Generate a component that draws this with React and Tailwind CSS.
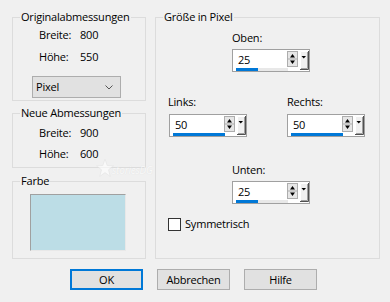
import React from "react";

function SpinBox({ value, bar = 22 }) {
  return (
    <div className="relative w-[78px] h-[23px] bg-white border border-[#a0a0a0] flex items-start">
      <span className="ml-[5px] mt-[2px] leading-[16px]">{value}</span>
      <div className="absolute left-[3px] top-[18px] w-[52px] h-[3px] bg-[#e8e8e8]">
        <div className="h-[3px] bg-[#0078d7]" style={{ width: bar }} />
      </div>
      <svg className="absolute left-[54px] top-[1px]" width="22" height="19" viewBox="0 0 22 19">
        <rect x="0.5" y="0.5" width="10" height="15" fill="#e6e6e6" stroke="#adadad" />
        <path d="M1 8 H10" stroke="#adadad" fill="none" />
        <path d="M3 6.5 L5.5 3 L8 6.5 Z" fill="#000" />
        <path d="M3 9.5 L8 9.5 L5.5 13 Z" fill="#000" />
        <rect x="13" y="0" width="8" height="18" fill="#f0f0f0" />
        <path d="M13.5 18 V0.5 H21" stroke="#ffffff" fill="none" />
        <path d="M21.5 0 V18.5 H13" stroke="#505050" fill="none" />
        <path d="M20.5 1 V17.5 H14" stroke="#a0a0a0" fill="none" />
        <path d="M14.5 5 L19 5 L16.75 7.5 Z" fill="#000" />
      </svg>
    </div>
  );
}

function Group({ title, className, children }) {
  return (
    <fieldset className={"border border-[#dcdcdc] " + className}>
      <legend className="ml-[7px] px-[1px] leading-[16px]">{title}</legend>
      {children}
    </fieldset>
  );
}

export default function App() {
  return (
    <div
      className="relative w-[390px] h-[302px] bg-[#f0f0f0] text-black text-[11px] tracking-[-0.2px] flex flex-col overflow-hidden"
      style={{ fontFamily: "'Open Sans', 'Noto Sans', sans-serif" }}
    >
      <div className="flex pl-[12px] pt-[9px]">
        <div className="w-[134px] flex flex-col">
          <Group title="Originalabmessungen" className="h-[92px]">
            <div className="flex flex-col pl-[26px] pt-[2px] gap-[6px]">
              <div className="flex leading-[16px]">
                <span className="w-[41px]">Breite:</span>
                <span>800</span>
              </div>
              <div className="flex leading-[16px]">
                <span className="w-[41px]">Höhe:</span>
                <span>550</span>
              </div>
            </div>
            <div className="ml-[19px] mt-[11px] w-[89px] h-[22px] bg-[#e1e1e1] border border-[#adadad] flex items-center justify-between pl-[3px] pr-[7px]">
              <span className="leading-[16px]">Pixel</span>
              <svg width="8" height="5" viewBox="0 0 8 5">
                <path d="M0.5 0.5 L4 4 L7.5 0.5" fill="none" stroke="#555" strokeWidth="1" />
              </svg>
            </div>
          </Group>
          <Group title="Neue Abmessungen" className="h-[63px] mt-[4px]">
            <div className="flex flex-col pl-[26px] pt-[4px] gap-[5px]">
              <div className="flex leading-[16px]">
                <span className="w-[41px]">Breite:</span>
                <span>900</span>
              </div>
              <div className="flex leading-[16px]">
                <span className="w-[41px]">Höhe:</span>
                <span>600</span>
              </div>
            </div>
          </Group>
          <Group title="Farbe" className="h-[86px] mt-[5px]">
            <div className="ml-[17px] mt-[5px] w-[96px] h-[57px] bg-[#bcdde6] border border-t-[#a0a0a0] border-l-[#a0a0a0] border-r-[#e8e8e8] border-b-[#e8e8e8]" />
          </Group>
        </div>
        <Group title="Größe in Pixel" className="ml-[9px] w-[225px] h-[250px]">
          <div className="flex flex-col ml-[76px] mt-[5px]">
            <span className="leading-[16px]">Oben:</span>
            <div className="mt-[3px]">
              <SpinBox value="25" />
            </div>
          </div>
          <div className="flex mt-[22px] ml-[12px]">
            <div className="flex flex-col">
              <span className="leading-[16px]">Links:</span>
              <div className="mt-[4px] ml-[1px]">
                <SpinBox value="50" bar="28" />
              </div>
            </div>
            <div className="flex flex-col ml-[40px]">
              <span className="leading-[16px]">Rechts:</span>
              <div className="mt-[4px]">
                <SpinBox value="50" bar="28" />
              </div>
            </div>
          </div>
          <div className="flex flex-col ml-[76px] mt-[25px]">
            <span className="leading-[16px]">Unten:</span>
            <div className="mt-[3px]">
              <SpinBox value="25" />
            </div>
          </div>
          <div className="flex items-center ml-[12px] mt-[12px]">
            <div className="w-[13px] h-[13px] bg-white border border-[#333333]" />
            <span className="ml-[4px] leading-[16px]">Symmetrisch</span>
          </div>
        </Group>
      </div>
      <div className="flex pl-[70px] mt-[10px] gap-[14px]">
        <button className="w-[73px] h-[21px] bg-[#e1e1e1] border-2 border-[#0078d7] leading-[16px]">OK</button>
        <button className="w-[73px] h-[21px] bg-[#e1e1e1] border border-[#adadad] leading-[16px]">Abbrechen</button>
        <button className="w-[73px] h-[21px] bg-[#e1e1e1] border border-[#adadad] leading-[16px]">Hilfe</button>
      </div>
      <div className="absolute left-[96px] top-[158px] flex items-end pointer-events-none opacity-60">
        <svg width="18" height="20" viewBox="0 0 18 20">
          <path d="M9 1 L11.2 7.5 L17.5 7.8 L12.5 11.8 L14.3 18.5 L9 14.6 L3.7 18.5 L5.5 11.8 L0.5 7.8 L6.8 7.5 Z" fill="#ffffff" stroke="#e2e2e2" strokeWidth="0.8" />
        </svg>
        <span className="italic text-[10px] text-white leading-[12px] mb-[2px] ml-[-2px]" style={{ textShadow: "0 0 1px #d0d0d0" }}>
          storiesDG
        </span>
      </div>
    </div>
  );
}
